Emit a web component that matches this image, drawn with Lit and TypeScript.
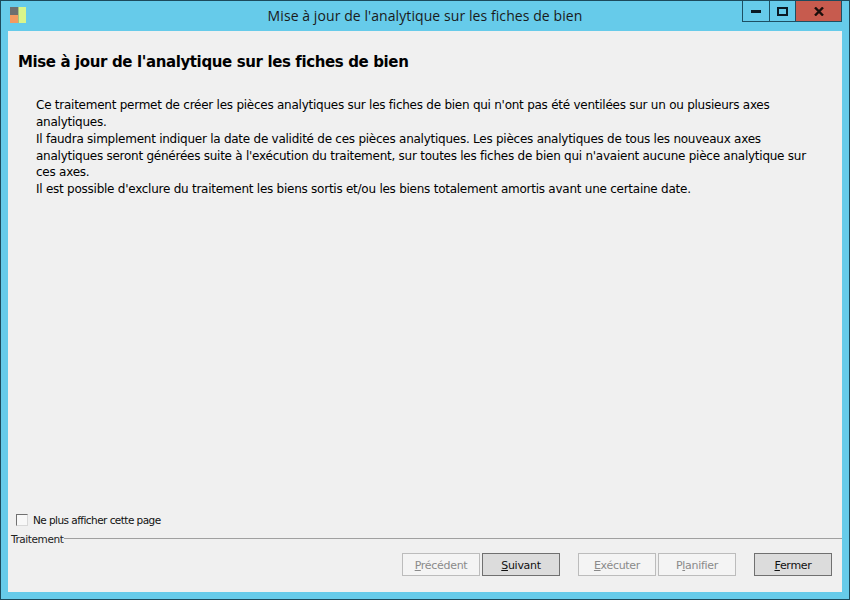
import { LitElement, html, css } from "lit";
import { customElement } from "lit/decorators.js";

@customElement("app-root")
export class AppRoot extends LitElement {
  static styles = css`
    :host { display: block; width: 850px; height: 600px; font-family: "DejaVu Sans", sans-serif; color: #000; }
    .window { box-sizing: border-box; width: 850px; height: 600px; background: #66cbea; border: 1px solid #1c4a5c; display: flex; flex-direction: column; padding: 0 7px 7px; }
    .titlebar { height: 30px; flex: none; display: flex; position: relative; align-items: flex-start; }
    .logo { margin: 6px 0 0 2px; flex: none; display: block; }
    .title { position: absolute; left: 0; right: 0; top: 6px; text-align: center; font: 14px/18px "Open Sans", sans-serif; letter-spacing: 0.08px; color: #1a1a1a; }
    .controls { margin-left: auto; display: flex; height: 21px; border: 1px solid #1d4f63; border-top: 0; box-sizing: border-box; position: relative; }
    .ctl { display: flex; align-items: center; justify-content: center; height: 20px; box-sizing: border-box; }
    .min { width: 27px; border-right: 1px solid #1d4f63; }
    .max { width: 26px; border-right: 1px solid #1d4f63; }
    .close { width: 45px; background: #c75b4e; }
    .client { flex: 1; background: #f0f0f0; display: flex; flex-direction: column; min-height: 0; }
    h1 { margin: 21px 0 0 10px; font: bold 15px/20px "DejaVu Sans", sans-serif; letter-spacing: -0.38px; }
    .body { margin: 25px 0 0 28px; font: 12px/16.85px "DejaVu Sans", sans-serif; letter-spacing: -0.25px; flex: 1; }
    .body span { display: block; white-space: nowrap; }
    .check { display: flex; align-items: center; margin: 0 0 5px 8px; gap: 5px; font: 10.5px/14px "DejaVu Sans", sans-serif; letter-spacing: -0.55px; color: #111; }
    .box { box-sizing: border-box; width: 12px; height: 12px; flex: none; background: #f8f8f8; border: 1px solid; border-color: #707070 #d8d8d8 #d8d8d8 #707070; }
    .group { display: flex; align-items: center; height: 13px; margin-left: 3px; font: 10.5px/13px "DejaVu Sans", sans-serif; letter-spacing: -0.42px; color: #222; }
    .group span { margin-top: 2px; }
    .rule { flex: 1; height: 1px; background: #a0a0a0; margin-left: 1px; }
    .actions { display: flex; height: 23px; margin: 8px 10px 16px 0; justify-content: flex-end; }
    button { box-sizing: border-box; width: 78px; height: 23px; padding: 1px 0 0; font: 11px/1 "DejaVu Sans", sans-serif; letter-spacing: -0.3px; border: 1px solid #707070; background: #dcdcdc; color: #111; margin-left: 2px; }
    button:disabled { border-color: #bcbcbc; background: #f4f4f4; color: #8a8a8a; }
    button.gap { margin-left: 18px; }
    u { text-underline-offset: 1px; }
  `;

  render() {
    return html`<div class="window">
      <div class="titlebar">
        <svg class="logo" width="18" height="16" viewBox="0 0 18 16">
          <rect x="0" y="0" width="8" height="8" fill="#6f6f6f"/>
          <rect x="0" y="8" width="8" height="8" fill="#f59a60"/>
          <rect x="8" y="0" width="8" height="16" fill="#d9f58a"/>
          <rect x="8" y="0" width="1" height="16" fill="#a8c080"/>
        </svg>
        <div class="title">Mise à jour de l'analytique sur les fiches de bien</div>
        <div class="controls">
          <div class="ctl min"><svg width="11" height="4" viewBox="0 0 11 4"><rect y="1" width="10" height="3" fill="#0a1a24"/></svg></div>
          <div class="ctl max"><svg width="11" height="9" viewBox="0 0 11 9"><rect x="1" y="1" width="9" height="7" fill="none" stroke="#0a1a24" stroke-width="2"/></svg></div>
          <div class="ctl close"><svg width="10" height="9" viewBox="0 0 10 9"><path d="M1 0.5 L9 8.5 M9 0.5 L1 8.5" stroke="#1a0f0c" stroke-width="2.4" fill="none"/></svg></div>
        </div>
      </div>
      <div class="client">
        <h1>Mise à jour de l'analytique sur les fiches de bien</h1>
        <div class="body">
          <span>Ce traitement permet de créer les pièces analytiques sur les fiches de bien qui n'ont pas été ventilées sur un ou plusieurs axes</span>
          <span>analytiques.</span>
          <span>Il faudra simplement indiquer la date de validité de ces pièces analytiques. Les pièces analytiques de tous les nouveaux axes</span>
          <span>analytiques seront générées suite à l'exécution du traitement, sur toutes les fiches de bien qui n'avaient aucune pièce analytique sur</span>
          <span>ces axes.</span>
          <span>Il est possible d'exclure du traitement les biens sortis et/ou les biens totalement amortis avant une certaine date.</span>
        </div>
        <label class="check"><span class="box"></span>Ne plus afficher cette page</label>
        <div class="group"><span>Traitement</span><div class="rule"></div></div>
        <div class="actions">
          <button disabled><u>P</u>récédent</button>
          <button><u>S</u>uivant</button>
          <button class="gap" disabled><u>E</u>xécuter</button>
          <button disabled>P<u>l</u>anifier</button>
          <button class="gap"><u>F</u>ermer</button>
        </div>
      </div>
    </div>`;
  }
}
